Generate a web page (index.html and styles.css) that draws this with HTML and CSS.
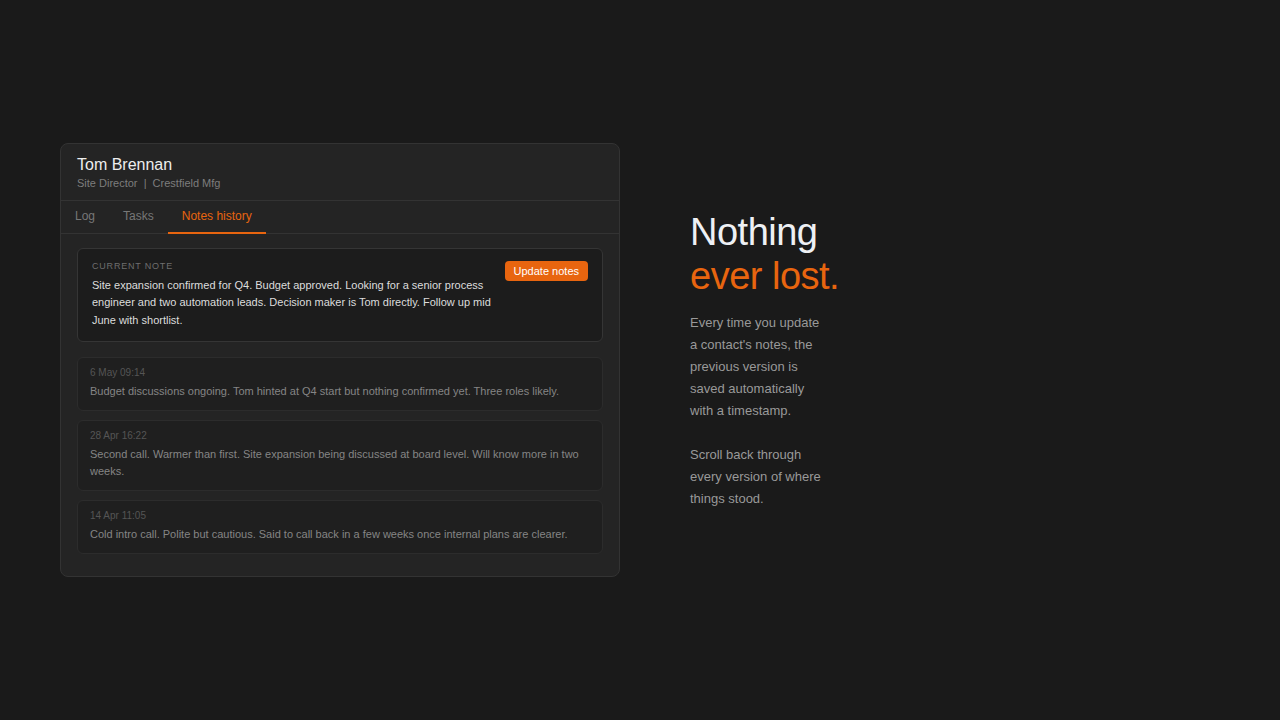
FILE: index.html
```html
<!DOCTYPE html>
<html>
<head>
<meta charset="utf-8">
<link rel="stylesheet" href="styles.css">
</head>
<body>
<div class="page">
  <div class="card">
    <div class="card-head">
      <div class="name">Tom Brennan</div>
      <div class="role">Site Director &nbsp;|&nbsp; Crestfield Mfg</div>
    </div>
    <div class="tabs">
      <div class="tab">Log</div>
      <div class="tab">Tasks</div>
      <div class="tab active">Notes history</div>
    </div>
    <div class="body">
      <div class="current">
        <div class="current-text">
          <div class="label">Current note</div>
          <div class="note">Site expansion confirmed for Q4. Budget approved. Looking for a senior process engineer and two automation leads. Decision maker is Tom directly. Follow up mid June with shortlist.</div>
        </div>
        <button class="btn">Update notes</button>
      </div>
      <div class="item">
        <div class="date">6 May 09:14</div>
        <div class="text">Budget discussions ongoing. Tom hinted at Q4 start but nothing confirmed yet. Three roles likely.</div>
      </div>
      <div class="item">
        <div class="date">28 Apr 16:22</div>
        <div class="text">Second call. Warmer than first. Site expansion being discussed at board level. Will know more in two weeks.</div>
      </div>
      <div class="item">
        <div class="date">14 Apr 11:05</div>
        <div class="text">Cold intro call. Polite but cautious. Said to call back in a few weeks once internal plans are clearer.</div>
      </div>
    </div>
  </div>
  <div class="side">
    <h1 class="title">Nothing<br><span class="accent">ever lost.</span></h1>
    <p class="desc">Every time you update a contact's notes, the previous version is saved automatically with a timestamp.</p>
    <p class="desc">Scroll back through every version of where things stood.</p>
  </div>
</div>
</body>
</html>
```

FILE: styles.css
```css
html, body {
  margin: 0;
  padding: 0;
  background: #1a1a1a;
  font-family: "Liberation Sans", Arial, sans-serif;
}
.page {
  height: 720px;
  display: flex;
  align-items: center;
  padding-left: 60px;
  gap: 70px;
  box-sizing: border-box;
}
.card {
  width: 560px;
  box-sizing: border-box;
  background: #242424;
  border: 1px solid #333;
  border-radius: 8px;
}
.card-head {
  padding: 12px 16px 10px;
  border-bottom: 1px solid #333;
}
.name {
  font-size: 16px;
  color: #eeeeee;
  line-height: 18px;
}
.role {
  font-size: 11px;
  color: #7d7d7d;
  margin-top: 2px;
  line-height: 14px;
}
.tabs {
  display: flex;
  border-bottom: 1px solid #333;
}
.tab {
  font-size: 12px;
  color: #777;
  padding: 8px 14px 8px;
  line-height: 15px;
  border-bottom: 2px solid transparent;
  margin-bottom: -1px;
}
.tab.active {
  color: #e8650f;
  border-bottom-color: #e8650f;
}
.body {
  padding: 14px 16px 22px;
  display: flex;
  flex-direction: column;
  gap: 9px;
}
.current {
  display: flex;
  align-items: flex-start;
  gap: 8px;
  background: #1c1c1c;
  border: 1px solid #353535;
  border-radius: 6px;
  padding: 11px 14px 12px;
  margin-bottom: 6px;
}
.current-text {
  flex: 1;
}
.label {
  font-size: 9px;
  letter-spacing: 0.8px;
  text-transform: uppercase;
  color: #6e6e6e;
  line-height: 12px;
}
.note {
  font-size: 11px;
  line-height: 17.5px;
  color: #dddddd;
  margin-top: 5px;
}
.btn {
  background: #e8650f;
  color: #fff;
  border: none;
  border-radius: 4px;
  font-family: inherit;
  font-size: 11px;
  padding: 0 9px;
  height: 20px;
  line-height: 20px;
  margin-top: 1px;
  white-space: nowrap;
}
.item {
  background: #1f1f1f;
  border: 1px solid #2c2c2c;
  border-radius: 6px;
  padding: 8px 12px 10px;
}
.date {
  font-size: 10px;
  color: #555;
  line-height: 13px;
}
.text {
  font-size: 11px;
  color: #858585;
  line-height: 17px;
  margin-top: 4px;
}
.side {
  width: 160px;
}
.title {
  font-size: 38px;
  font-weight: normal;
  letter-spacing: -0.5px;
  line-height: 44px;
  color: #eef0f4;
  margin: 0 0 14px;
}
.accent {
  color: #e8650f;
}
.desc {
  font-size: 13px;
  line-height: 22px;
  color: #999;
  margin: 0 0 22px;
  width: 140px;
}
.desc:last-child {
  margin-bottom: 0;
}
```
